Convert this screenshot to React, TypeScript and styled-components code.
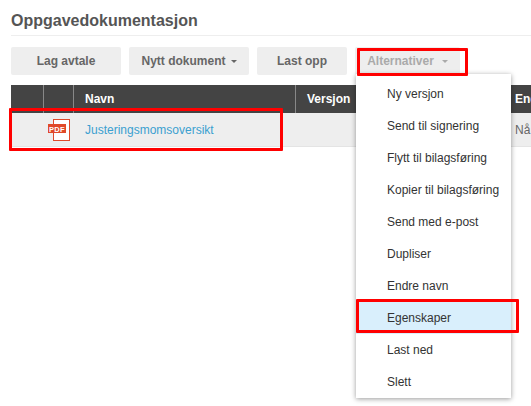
import React from "react"
import styled, { createGlobalStyle } from "styled-components"

const GlobalStyle = createGlobalStyle`
    html, body {
        margin: 0;
        padding: 0;
        background: #fff;
        font-family: "Liberation Sans", Arial, sans-serif;
    }
`

const COLUMNS = "32px 30px 222px 61px 147px 1fr"

const Page = styled.div`
    position: relative;
    width: 531px;
    height: 406px;
    overflow: hidden;
    padding: 11px 0 0 11px;
    box-sizing: border-box;
`

const Title = styled.h1`
    margin: 0;
    height: 24px;
    border-bottom: 1px solid #eee;
    font-size: 16px;
    line-height: 19px;
    font-weight: 700;
    color: #555;
`

const Toolbar = styled.div`
    display: flex;
    gap: 8px;
    margin-top: 11px;
`

const Button = styled.div<{ $width: number; $muted?: boolean }>`
    display: flex;
    align-items: center;
    justify-content: center;
    gap: ${(p) => (p.$muted ? 8 : 5)}px;
    width: ${(p) => p.$width}px;
    height: 28px;
    border-radius: 2px;
    background: #eee;
    font-size: 12px;
    font-weight: 700;
    color: ${(p) => (p.$muted ? "#aaa" : "#666")};
`

const Caret = styled.span`
    width: 0;
    height: 0;
    margin-top: 1px;
    border-left: 3px solid transparent;
    border-right: 3px solid transparent;
    border-top: 3px solid currentColor;
`

const Table = styled.div`
    margin-top: 10px;
    width: 520px;
`

const HeadRow = styled.div`
    display: grid;
    grid-template-columns: ${COLUMNS};
    height: 28px;
    background: #444;
    color: #fff;
    font-size: 12px;
    font-weight: 700;
`

const HeadCell = styled.div`
    display: flex;
    align-items: center;
    padding-left: 11px;
    white-space: nowrap;
    overflow: hidden;
    border-left: 1px solid #888;
    &:first-child {
        border-left: 0;
    }
`

const BodyRow = styled.div`
    display: grid;
    grid-template-columns: ${COLUMNS};
    height: 34px;
    background: #eee;
    border-bottom: 1px solid #e4e4e4;
    box-sizing: border-box;
    font-size: 12px;
    color: #666;
`

const BodyCell = styled.div`
    display: flex;
    align-items: center;
    padding-left: 12px;
    white-space: nowrap;
    overflow: hidden;
`

const IconCell = styled.div`
    display: flex;
    align-items: center;
    padding-left: 5px;
`

const DocLink = styled.a`
    color: #3ba0d0;
    text-decoration: none;
`

const Menu = styled.ul`
    position: absolute;
    left: 356px;
    top: 74px;
    width: 155px;
    height: 324px;
    margin: 0;
    padding: 4px 0 0;
    box-sizing: border-box;
    list-style: none;
    background: #fff;
    box-shadow: 0 1px 5px rgba(0, 0, 0, 0.4);
`

const MenuItem = styled.li<{ $active?: boolean }>`
    display: flex;
    align-items: center;
    height: 32px;
    padding-left: 31px;
    font-size: 12px;
    color: #333;
    background: ${(p) => (p.$active ? "#d9effc" : "transparent")};
`

const Highlight = styled.div<{ $x: number; $y: number; $w: number; $h: number }>`
    position: absolute;
    left: ${(p) => p.$x}px;
    top: ${(p) => p.$y}px;
    width: ${(p) => p.$w}px;
    height: ${(p) => p.$h}px;
    box-sizing: border-box;
    border: 3px solid #f00;
    border-radius: 1px;
`

const PdfIcon = () => (
    <svg width="22" height="22" viewBox="0 0 22 22">
        <rect x="5.5" y="0.5" width="16" height="21" fill="#fff" stroke="#e0492a" />
        <rect x="0" y="5" width="18" height="9" fill="#e0492a" />
        <text
            x="9"
            y="12.5"
            textAnchor="middle"
            fontSize="7.5"
            fontWeight="700"
            letterSpacing="0.4"
            fill="#fff"
            fontFamily="Liberation Sans, sans-serif"
        >
            PDF
        </text>
    </svg>
)

const menuItems = [
    "Ny versjon",
    "Send til signering",
    "Flytt til bilagsføring",
    "Kopier til bilagsføring",
    "Send med e-post",
    "Dupliser",
    "Endre navn",
    "Egenskaper",
    "Last ned",
    "Slett",
]

const App: React.FC = () => {
    return (
        <Page>
            <GlobalStyle />
            <Title>Oppgavedokumentasjon</Title>
            <Toolbar>
                <Button $width={110}>Lag avtale</Button>
                <Button $width={120}>
                    Nytt dokument <Caret />
                </Button>
                <Button $width={90}>Last opp</Button>
                <Button $width={105} $muted>
                    Alternativer <Caret />
                </Button>
            </Toolbar>
            <Table>
                <HeadRow>
                    <HeadCell />
                    <HeadCell />
                    <HeadCell>Navn</HeadCell>
                    <HeadCell>Versjon</HeadCell>
                    <HeadCell />
                    <HeadCell>Endret</HeadCell>
                </HeadRow>
                <BodyRow>
                    <BodyCell />
                    <IconCell>
                        <PdfIcon />
                    </IconCell>
                    <BodyCell>
                        <DocLink>Justeringsmomsoversikt</DocLink>
                    </BodyCell>
                    <BodyCell />
                    <BodyCell />
                    <BodyCell>Nå</BodyCell>
                </BodyRow>
            </Table>
            <Menu>
                {menuItems.map((item) => (
                    <MenuItem key={item} $active={item === "Egenskaper"}>
                        {item}
                    </MenuItem>
                ))}
            </Menu>
            <Highlight $x={9} $y={108} $w={274} $h={43} />
            <Highlight $x={357} $y={48} $w={111} $h={28} />
            <Highlight $x={356} $y={299} $w={163} $h={34} />
        </Page>
    )
}

export default App
